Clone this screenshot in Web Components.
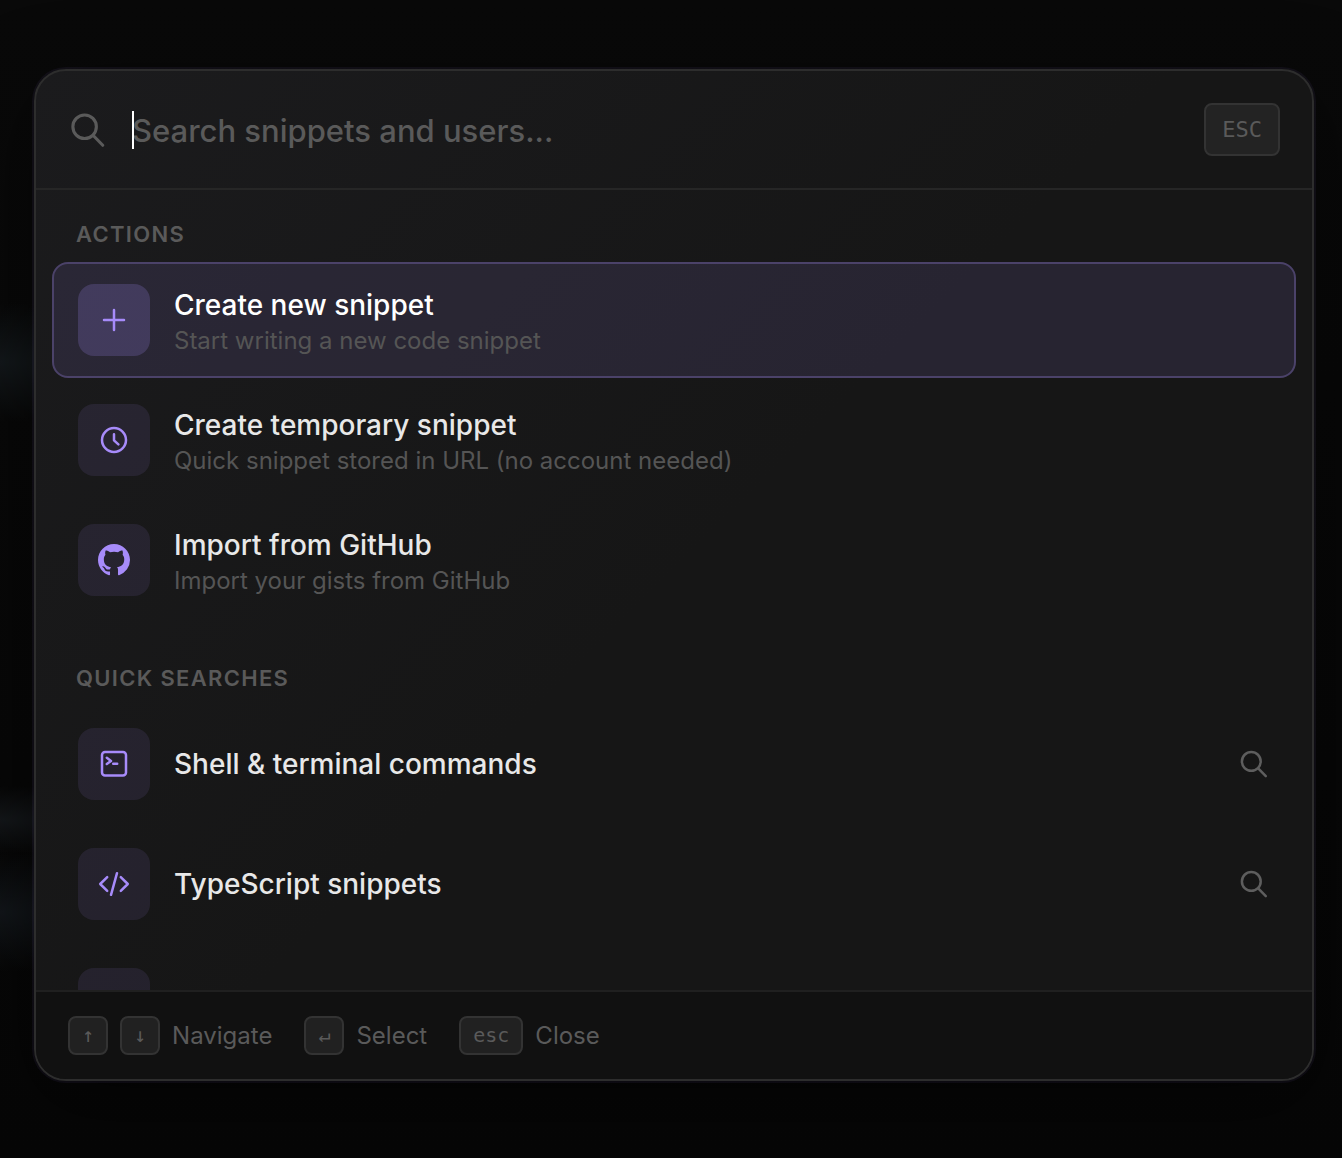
<!DOCTYPE html>
<html lang="en">
<head>
<meta charset="UTF-8">
<meta name="viewport" content="width=device-width, initial-scale=1.0">
<title>Command palette</title>
<style>
    html {
        min-height: 100%;
        background: #060606;
    }
    body {
        margin: 0;
        padding: 69px 28px 77px 34px;
        font-family: Inter, "Liberation Sans", sans-serif;
        color: #e8e8e8;
        background:
            radial-gradient(ellipse 160px 60px at 0 362px, #13181b, transparent),
            radial-gradient(ellipse 160px 34px at 0 820px, #14171a, transparent),
            radial-gradient(ellipse 160px 60px at 0 912px, #12161a, transparent),
            linear-gradient(#090909, #060606);
    }
</style>
</head>
<body>
<command-palette>
    <search-field slot="header" placeholder="Search snippets and users..."></search-field>

    <palette-section heading="Actions">
        <palette-item icon="plus" active>
            Create new snippet
            <span slot="description">Start writing a new code snippet</span>
        </palette-item>
        <palette-item icon="clock">
            Create temporary snippet
            <span slot="description">Quick snippet stored in URL (no account needed)</span>
        </palette-item>
        <palette-item icon="github">
            Import from GitHub
            <span slot="description">Import your gists from GitHub</span>
        </palette-item>
    </palette-section>

    <palette-section heading="Quick searches">
        <palette-item icon="terminal" search>Shell &amp; terminal commands</palette-item>
        <palette-item icon="code" search>TypeScript snippets</palette-item>
        <palette-item icon="code" search></palette-item>
    </palette-section>

    <key-hint slot="footer" keys="↑ ↓">Navigate</key-hint>
    <key-hint slot="footer" keys="↵">Select</key-hint>
    <key-hint slot="footer" keys="esc">Close</key-hint>
</command-palette>

<script>
const ICONS = {
    search: '<circle cx="13.3" cy="13.4" r="9.4"/><path d="M20.2 20.4 27.8 28.2"/>',
    plus: '<path d="M16 6v20M6 16h20"/>',
    clock: '<circle cx="16" cy="16" r="12"/><path d="M16 10.3v6l4.4 4"/>',
    github: '<path transform="scale(2)" fill="currentColor" stroke="none" d="M8 0C3.58 0 0 3.58 0 8c0 3.54 2.29 6.53 5.47 7.59.4.07.55-.17.55-.38 0-.19-.01-.82-.01-1.49-2.01.37-2.53-.49-2.69-.94-.09-.23-.48-.94-.82-1.13-.28-.15-.68-.52-.01-.53.63-.01 1.08.58 1.23.82.72 1.21 1.87.87 2.33.66.07-.52.28-.87.51-1.07-1.78-.2-3.64-.89-3.64-3.95 0-.87.31-1.59.82-2.15-.08-.2-.36-1.02.08-2.12 0 0 .67-.21 2.2.82.64-.18 1.32-.27 2-.27s1.36.09 2 .27c1.53-1.04 2.2-.82 2.2-.82.44 1.1.16 1.92.08 2.12.51.56.82 1.27.82 2.15 0 3.07-1.87 3.75-3.65 3.95.29.25.54.73.54 1.48 0 1.07-.01 1.93-.01 2.2 0 .21.15.46.55.38A8.01 8.01 0 0 0 16 8c0-4.42-3.58-8-8-8Z"/>',
    terminal: '<rect x="4" y="4" width="24" height="23.6" rx="3"/><path d="m8.8 9.8 4.2 3.1-4.2 3.1M15.2 15.8h4"/>',
    code: '<path d="M9.2 9.2 2.2 16l7 6.8M19 5.2l-6 21.6M22.8 9.2l7 6.8-7 6.8"/>',
};

function icon(name) {
    return `<svg viewBox="0 0 32 32" fill="none" stroke="currentColor" stroke-width="2.5" stroke-linecap="round" stroke-linejoin="round" aria-hidden="true">${ICONS[name]}</svg>`;
}

class KeyCap extends HTMLElement {
    constructor() {
        super();
        this.attachShadow({ mode: 'open' });
    }

    connectedCallback() {
        this.shadowRoot.innerHTML = `
            <style>
                :host {
                    display: block;
                    flex: none;
                }
                kbd {
                    display: block;
                    padding: 4px 12px;
                    border: 2px solid #333;
                    border-radius: 8px;
                    background: #212121;
                    color: #5a5a5a;
                    font: 20px/27px "DejaVu Sans Mono", monospace;
                }
                :host([large]) kbd {
                    padding: 8px 16px;
                    background: #232323;
                    font-size: 22px;
                    line-height: 33px;
                }
            </style>
            <kbd><slot></slot></kbd>
        `;
    }
}

class SearchField extends HTMLElement {
    constructor() {
        super();
        this.attachShadow({ mode: 'open' });
    }

    connectedCallback() {
        const placeholder = this.getAttribute('placeholder') || '';

        this.shadowRoot.innerHTML = `
            <style>
                :host {
                    display: flex;
                    align-items: center;
                    gap: 24px;
                    padding: 32px;
                    border-bottom: 2px solid #262626;
                }
                svg {
                    display: block;
                    width: 40px;
                    height: 40px;
                    color: #5a5a5a;
                }
                .field {
                    flex: 1;
                    min-width: 0;
                    position: relative;
                }
                /* Always-on caret in front of the text */
                .field::before {
                    content: "";
                    position: absolute;
                    left: 0;
                    top: 0;
                    bottom: 0;
                    width: 2px;
                    background: #fff;
                }
                input {
                    display: block;
                    box-sizing: border-box;
                    width: 100%;
                    height: 38px;
                    padding: 2px 0 0;
                    border: 0;
                    outline: 0;
                    background: transparent;
                    color: #e8e8e8;
                    caret-color: transparent;
                    font-family: inherit;
                    font-size: 31px;
                    font-weight: 450;
                    line-height: 36px;
                }
                input::placeholder {
                    color: #5a5a5a;
                    opacity: 1;
                }
            </style>
            ${icon('search')}
            <div class="field">
                <input type="text" placeholder="${placeholder}" aria-label="${placeholder}">
            </div>
            <key-cap large>ESC</key-cap>
        `;
    }
}

class PaletteSection extends HTMLElement {
    constructor() {
        super();
        this.attachShadow({ mode: 'open' });
    }

    connectedCallback() {
        this.shadowRoot.innerHTML = `
            <style>
                :host {
                    display: block;
                }
                h2 {
                    margin: 0;
                    padding: 12px 24px;
                    color: #5a5a5a;
                    font-size: 22px;
                    font-weight: 600;
                    line-height: 32px;
                    letter-spacing: 0.06em;
                    text-transform: uppercase;
                }
                .items {
                    display: flex;
                    flex-direction: column;
                    gap: 4px;
                }
            </style>
            <h2>${this.getAttribute('heading')}</h2>
            <div class="items"><slot></slot></div>
        `;
    }
}

class PaletteItem extends HTMLElement {
    constructor() {
        super();
        this.attachShadow({ mode: 'open' });
    }

    connectedCallback() {
        const trailing = this.hasAttribute('search') ? `<span class="trailing">${icon('search')}</span>` : '';

        this.shadowRoot.innerHTML = `
            <style>
                :host {
                    display: block;
                }
                button {
                    display: flex;
                    align-items: center;
                    gap: 24px;
                    width: 100%;
                    padding: 20px 24px;
                    border: 2px solid transparent;
                    border-radius: 16px;
                    background: transparent;
                    color: #e8e8e8;
                    font: inherit;
                    text-align: left;
                    cursor: pointer;
                }
                svg {
                    display: block;
                    width: 32px;
                    height: 32px;
                }
                .tile {
                    display: grid;
                    place-items: center;
                    flex: none;
                    width: 72px;
                    height: 72px;
                    border-radius: 16px;
                    background: rgba(167, 139, 250, 0.1);
                    color: #a78bfa;
                }
                .text {
                    flex: 1;
                    min-width: 0;
                    display: flex;
                    flex-direction: column;
                }
                .title {
                    font-size: 28px;
                    font-weight: 500;
                    line-height: 42px;
                }
                .description {
                    color: #555;
                    font-size: 24px;
                    line-height: 30px;
                }
                .trailing {
                    color: #5e5e5e;
                }
                :host([active]) button {
                    border-color: #4b4269;
                    background: rgba(167, 139, 250, 0.12);
                    color: #fff;
                }
                :host([active]) .tile {
                    background: rgba(167, 139, 250, 0.2);
                }
            </style>
            <button type="button">
                <span class="tile">${icon(this.getAttribute('icon'))}</span>
                <span class="text">
                    <span class="title"><slot></slot></span>
                    <span class="description"><slot name="description"></slot></span>
                </span>
                ${trailing}
            </button>
        `;
    }
}

class KeyHint extends HTMLElement {
    constructor() {
        super();
        this.attachShadow({ mode: 'open' });
    }

    connectedCallback() {
        const keys = this.getAttribute('keys').split(' ');

        this.shadowRoot.innerHTML = `
            <style>
                :host {
                    display: flex;
                    align-items: center;
                    gap: 12px;
                    color: #5a5a5a;
                    font-size: 24px;
                    line-height: 32px;
                }
            </style>
            ${keys.map((key) => `<key-cap>${key}</key-cap>`).join('')}
            <span><slot></slot></span>
        `;
    }
}

class CommandPalette extends HTMLElement {
    constructor() {
        super();
        this.attachShadow({ mode: 'open' });
    }

    connectedCallback() {
        this.shadowRoot.innerHTML = `
            <style>
                :host {
                    display: block;
                    border: 2px solid #2d2d2d;
                    border-radius: 32px;
                    overflow: hidden;
                    background: linear-gradient(135deg, #1b1b1d, #161616 50%, #161616);
                    box-shadow: 0 0 0 2px rgba(167, 139, 250, 0.06), 0 24px 80px rgba(0, 0, 0, 0.5);
                }
                main {
                    display: flex;
                    flex-direction: column;
                    gap: 32px;
                    box-sizing: border-box;
                    max-height: 800px;
                    padding: 16px;
                    overflow: hidden;
                }
                footer {
                    display: flex;
                    flex-wrap: wrap;
                    gap: 32px;
                    padding: 24px 32px;
                    border-top: 2px solid #202020;
                    background: #111;
                }
            </style>
            <slot name="header"></slot>
            <main><slot></slot></main>
            <footer><slot name="footer"></slot></footer>
        `;
    }
}

customElements.define('key-cap', KeyCap);
customElements.define('search-field', SearchField);
customElements.define('palette-section', PaletteSection);
customElements.define('palette-item', PaletteItem);
customElements.define('key-hint', KeyHint);
customElements.define('command-palette', CommandPalette);
</script>
</body>
</html>
